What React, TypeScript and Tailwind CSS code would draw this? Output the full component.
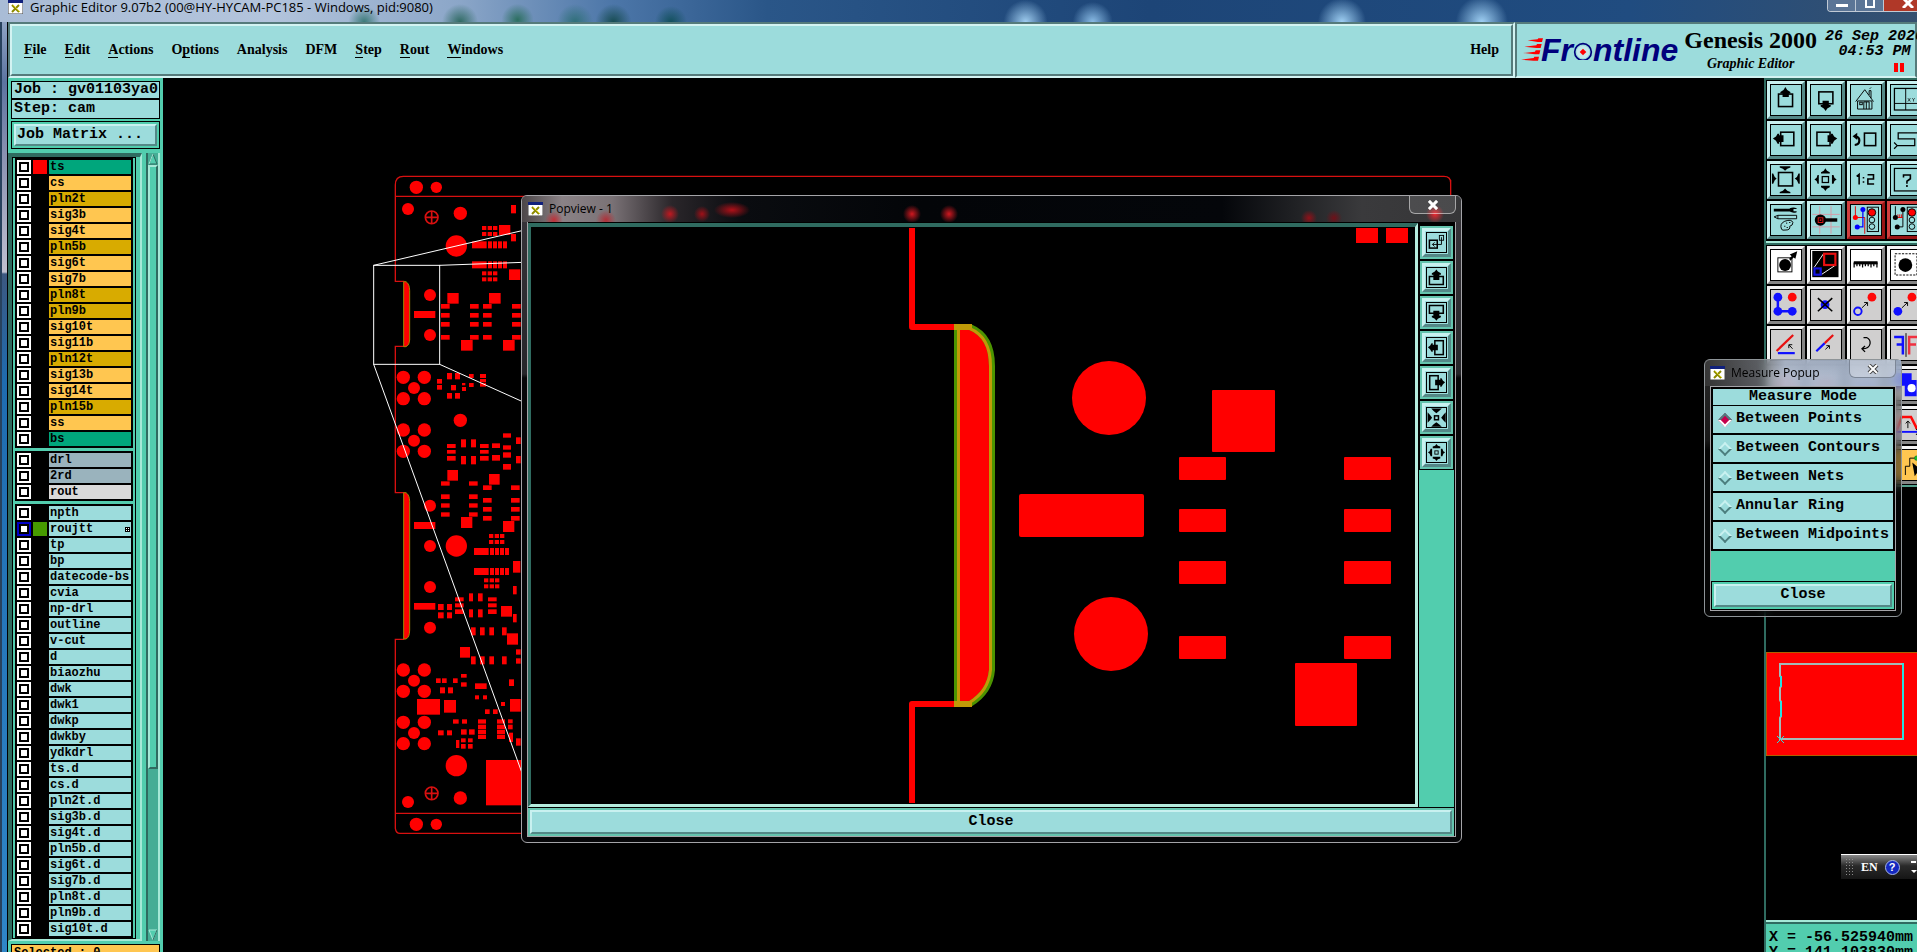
import { useState, type ReactNode } from "react";
import { clsx } from "clsx";

type Layer = {
  name: string;
  tone: string;
  swatch?: string;
  work?: boolean;
};

const GREEN = "bg-[#00a67c]";
const AMBER = "bg-[#ffc650]";
const GOLD = "bg-[#d8ab00]";
const STEEL = "bg-[#9ab3bd]";
const SILVER = "bg-[#dadada]";
const AQUA = "bg-[#9cdcdc]";

const raised = "border-[#c9f1f0] border-r-[#548887] border-b-[#548887]";
const mono = "font-['Liberation_Mono',monospace] font-bold";

const misc = [
  "tp", "bp", "datecode-bs", "cvia", "np-drl", "outline", "v-cut", "d", "biaozhu",
  "dwk", "dwk1", "dwkp", "dwkby", "ydkdrl", "ts.d", "cs.d", "pln2t.d", "sig3b.d",
  "sig4t.d", "pln5b.d", "sig6t.d", "sig7b.d", "pln8t.d", "pln9b.d", "sig10t.d",
];

const layerGroups: Layer[][] = [
  [
    { name: "ts", tone: GREEN, swatch: "bg-[#ff0000]" },
    { name: "cs", tone: AMBER },
    { name: "pln2t", tone: GOLD },
    { name: "sig3b", tone: AMBER },
    { name: "sig4t", tone: AMBER },
    { name: "pln5b", tone: GOLD },
    { name: "sig6t", tone: AMBER },
    { name: "sig7b", tone: AMBER },
    { name: "pln8t", tone: GOLD },
    { name: "pln9b", tone: GOLD },
    { name: "sig10t", tone: AMBER },
    { name: "sig11b", tone: AMBER },
    { name: "pln12t", tone: GOLD },
    { name: "sig13b", tone: AMBER },
    { name: "sig14t", tone: AMBER },
    { name: "pln15b", tone: GOLD },
    { name: "ss", tone: AMBER },
    { name: "bs", tone: GREEN },
  ],
  [
    { name: "drl", tone: STEEL },
    { name: "2rd", tone: STEEL },
    { name: "rout", tone: SILVER },
  ],
  [
    { name: "npth", tone: AQUA },
    { name: "roujtt", tone: AQUA, swatch: "bg-[#469a00]", work: true },
    ...misc.map((name) => ({ name, tone: AQUA })),
  ],
];

// label, index of the underlined mnemonic (-1 for none)
const menus: [string, number][] = [
  ["File", 0],
  ["Edit", 0],
  ["Actions", 0],
  ["Options", 1],
  ["Analysis", -1],
  ["DFM", -1],
  ["Step", 0],
  ["Rout", 0],
  ["Windows", 0],
];

const measureModes = [
  "Between Points",
  "Between Contours",
  "Between Nets",
  "Annular Ring",
  "Between Midpoints",
];

/* Board artwork, three units to a pixel */
const drills: [number, number, number][] = [
  [169, 82, 20], [229, 82, 17], [144, 147, 18], [301, 160, 20], [289, 258, 32],
  [210, 405, 18], [210, 525, 18], [301, 781, 20], [210, 1037, 18],
  [289, 1158, 32], [210, 1158, 18], [210, 1281, 18], [210, 1403, 18],
  [289, 1817, 32], [144, 1926, 18], [301, 1914, 20], [169, 1993, 20], [229, 1993, 17],
];

const quads = [684, 842, 1562, 1719];

const pads: [number, number, number, number][] = [
  [453, 135, 15, 25], [417, 195, 34, 30], [453, 222, 15, 22], [447, 328, 34, 32],
  [262, 399, 34, 32], [387, 399, 35, 32], [303, 540, 35, 32], [429, 540, 35, 32],
  [162, 453, 64, 21], [162, 1086, 64, 21], [162, 1329, 64, 20],
  [231, 657, 15, 14], [231, 675, 15, 14], [261, 639, 15, 19], [285, 639, 15, 19],
  [273, 675, 15, 16], [306, 669, 10, 7], [306, 681, 12, 12], [261, 699, 15, 17],
  [285, 699, 15, 17], [327, 642, 14, 12], [327, 669, 14, 12], [360, 642, 18, 12],
  [360, 657, 18, 10], [360, 669, 18, 11],
  [261, 852, 26, 12], [261, 870, 26, 11], [261, 888, 26, 14],
  [303, 838, 15, 24], [333, 838, 15, 24], [303, 888, 15, 25], [333, 888, 15, 25],
  [360, 852, 26, 12], [360, 870, 26, 11], [360, 888, 26, 14],
  [396, 850, 24, 14], [396, 885, 24, 17], [429, 820, 24, 13], [429, 856, 24, 13],
  [429, 877, 24, 16], [429, 912, 24, 17], [468, 832, 14, 20], [468, 888, 14, 22],
  [262, 930, 32, 32], [387, 942, 32, 32],
  [243, 964, 26, 13], [327, 964, 26, 13], [243, 1003, 26, 14], [327, 1003, 26, 14],
  [243, 1030, 26, 13], [327, 1030, 26, 13], [243, 1057, 26, 13], [327, 1057, 26, 13],
  [369, 976, 26, 14], [453, 976, 26, 14], [369, 1014, 26, 14], [453, 1014, 26, 14],
  [369, 1041, 26, 14], [453, 1041, 26, 14], [369, 1068, 26, 14], [453, 1068, 26, 14],
  [303, 1071, 34, 33], [429, 1083, 34, 33],
  [459, 1203, 22, 35], [459, 1278, 11, 25], [459, 1362, 11, 25],
  [327, 1300, 12, 24], [354, 1300, 14, 24], [327, 1348, 12, 24], [354, 1348, 14, 24],
  [285, 1312, 26, 12], [285, 1330, 26, 12], [285, 1348, 26, 14],
  [384, 1312, 26, 12], [384, 1330, 26, 12], [384, 1348, 26, 14],
  [423, 1338, 33, 32], [234, 1332, 17, 18], [261, 1332, 15, 18],
  [234, 1357, 17, 18], [261, 1357, 15, 18],
  [333, 1402, 14, 24], [360, 1402, 14, 24], [388, 1402, 14, 24], [426, 1402, 14, 24],
  [333, 1489, 14, 24], [360, 1489, 14, 24], [388, 1489, 14, 24], [426, 1489, 14, 24],
  [441, 1420, 33, 34], [300, 1461, 30, 32], [468, 1468, 14, 16], [468, 1495, 14, 16],
  [228, 1555, 14, 14], [246, 1555, 14, 14], [279, 1555, 14, 14], [303, 1542, 17, 11],
  [303, 1567, 17, 13], [240, 1582, 15, 18], [264, 1582, 15, 18],
  [171, 1617, 69, 47], [252, 1620, 36, 38], [345, 1570, 35, 17], [447, 1558, 15, 20],
  [345, 1606, 12, 12], [369, 1606, 12, 12], [423, 1626, 12, 12], [450, 1617, 32, 38],
  [375, 1648, 14, 14], [399, 1648, 14, 14], [279, 1678, 17, 13], [306, 1678, 15, 13],
  [354, 1678, 24, 13], [354, 1694, 24, 13], [354, 1709, 24, 13], [354, 1724, 24, 13],
  [411, 1678, 24, 13], [411, 1694, 24, 13], [411, 1709, 24, 13], [411, 1724, 24, 13],
  [444, 1678, 14, 12], [444, 1694, 14, 14], [447, 1718, 12, 28],
  [234, 1711, 17, 15], [261, 1711, 15, 15], [303, 1708, 17, 16], [327, 1708, 17, 16],
  [288, 1740, 10, 24], [303, 1735, 14, 12], [303, 1752, 14, 14], [324, 1735, 14, 12],
  [324, 1752, 14, 14], [468, 1735, 14, 22], [378, 1800, 110, 136],
];

// fine-pitch rows: a merged bar, then single fingers
const combs: [number, number][] = [[336, 244], [336, 304], [342, 1164], [342, 1224]];
const grids: [number, number][] = [[366, 198], [366, 334], [387, 1122], [372, 1255]];

function BoardView() {
  return (
    <svg className="absolute inset-0 h-full w-full" aria-label="Board view">
      <g transform="translate(197 82) scale(0.33333)">
        <g fill="none" stroke="#d81010" strokeWidth="4">
          <path d="M3272 60V240M3272 68Q3272 49 3252 49H130Q106 49 106 75V364H133M133 559H106V998H133M133 1438H106V2005Q108 2020 120 2020H600M106 109H600M106 1960H600" />
          <circle cx="215" cy="172" r="19" strokeWidth="5" />
          <path d="M215 153V191M196 172H234" strokeWidth="5" />
          <circle cx="215" cy="1900" r="19" strokeWidth="5" />
          <path d="M215 1881V1919M196 1900H234" strokeWidth="5" />
        </g>
        <g fill="#ff0000">
          {drills.map(([x, y, r]) => (
            <circle key={`${x}-${y}`} cx={x} cy={y} r={r} />
          ))}
          {quads.map((y) => (
            <g key={y}>
              <circle cx="130" cy={y - 32} r="20" />
              <circle cx="193" cy={y - 32} r="20" />
              <circle cx="162" cy={y} r="18" />
              <circle cx="130" cy={y + 32} r="20" />
              <circle cx="193" cy={y + 32} r="20" />
            </g>
          ))}
          {pads.map(([x, y, w, h]) => (
            <rect key={`${x}-${y}`} x={x} y={y} width={w} height={h} />
          ))}
          {[243, 330, 369, 456].map((x) =>
            [432, 459, 486, 525].map((y) => (
              <rect key={`${x}-${y}`} x={x} y={y} width="26" height="14" />
            )),
          )}
          {combs.map(([x, y]) => (
            <g key={y}>
              <rect x={x} y={y} width="44" height="21" />
              {[48, 63, 78, 93].map((dx) => (
                <rect key={dx} x={x + dx} y={y} width="12" height="21" />
              ))}
            </g>
          ))}
          {grids.map(([x, y]) =>
            [0, 17, 33].map((dx) =>
              [0, 18].map((dy) => (
                <rect key={`${x}-${y}-${dx}-${dy}`} x={x + dx} y={y + dy} width="13" height="12" />
              )),
            ),
          )}
        </g>
        <g fill="#ff0000" stroke="#9c8a00" strokeWidth="3">
          <path d="M131 365H138Q149 372 149 392V540Q149 556 138 560H131Z" />
          <path d="M131 998H138Q149 1005 149 1025V1410Q149 1432 138 1437H131Z" />
        </g>
        <g fill="none" stroke="#ffffff" strokeWidth="3">
          <rect x="41" y="316" width="198" height="297" />
          <path d="M41 316L490 211M239 316L490 307M239 613L490 726M41 613L490 1850" />
        </g>
      </g>
    </svg>
  );
}

function PopviewDrawing() {
  const slot = "M957 327H970Q992 336 992 366V670Q990 692 970 704H957Z";

  return (
    <svg className="h-full w-full" aria-label="Popview drawing">
      <clipPath id="slot">
        <path d={slot} />
      </clipPath>
      <g transform="translate(-531 -227)">
        <g fill="none" stroke="#ff0000" strokeWidth="6" strokeLinejoin="round">
          <path d="M912 228V327H960M960 704H912V803" />
        </g>
        <path d={slot} fill="#ff0000" stroke="#4c9400" strokeWidth="6" strokeLinejoin="round" />
        <path d={slot} fill="none" stroke="#c09a08" strokeWidth="6" clipPath="url(#slot)" />
        <path d="M954 327H972M954 704H972" stroke="#c09a08" strokeWidth="6" />
        <g fill="#ff0000">
          <circle cx="1109" cy="398" r="37" />
          <circle cx="1111" cy="634" r="37" />
          <rect x="1212" y="390" width="63" height="62" rx="1" />
          <rect x="1295" y="663" width="62" height="63" rx="1" />
          <rect x="1019" y="494" width="125" height="43" rx="2" />
          {[457, 509, 561, 636].map((y) => (
            <g key={y}>
              <rect x="1179" y={y} width="47" height="23" rx="1" />
              <rect x="1344" y={y} width="47" height="23" rx="1" />
            </g>
          ))}
          <rect x="1356" y="228" width="22" height="15" />
          <rect x="1386" y="228" width="22" height="15" />
        </g>
      </g>
    </svg>
  );
}

const line = { fill: "none", stroke: "#000", strokeWidth: 5 };
const thin = { fill: "none", stroke: "#000", strokeWidth: 3 };

const viewTools: { label: string; icon: ReactNode; red?: boolean }[] = [
  {
    label: "Pan up",
    icon: (
      <>
        <rect x="24" y="29" width="45" height="40" {...line} />
        <path d="M46 6L52 16L62 22V27H57V38H37V27H30V22L40 16Z" />
      </>
    ),
  },
  {
    label: "Pan down",
    icon: (
      <>
        <rect x="25" y="22" width="45" height="38" {...line} />
        <path d="M37 50H57V64H63V69L52 75L47 83L41 75L31 69V64H37Z" />
      </>
    ),
  },
  {
    label: "Home",
    icon: (
      <>
        <path d="M15 53L44 15L72 53M21 51V77H67V51H21M41 77V54H58V77M58 32V18H64V42M49 54V77M60 12L64 8" {...thin} />
        <rect x="28" y="55" width="8" height="8" {...thin} />
      </>
    ),
  },
  {
    label: "XY area",
    icon: (
      <>
        <rect x="11" y="11" width="76" height="69" {...line} strokeWidth={4} />
        <path d="M47 11V80M11 59H87" {...thin} />
        <path d="M54 42L62 53M62 42L54 53M68 42L72 47L76 42M72 47V53" {...thin} strokeWidth={2} />
      </>
    ),
  },
  {
    label: "Pan left",
    icon: (
      <>
        <rect x="31" y="23" width="42" height="43" {...line} />
        <path d="M6 43L16 37L21 28H26V33H40V54H26V60H21L16 50Z" />
      </>
    ),
  },
  {
    label: "Pan right",
    icon: (
      <>
        <rect x="19" y="23" width="42" height="43" {...line} />
        <path d="M84 43L74 37L69 28H64V33H53V54H64V60H69L74 50Z" />
      </>
    ),
  },
  {
    label: "Previous view",
    icon: (
      <>
        <rect x="43" y="26" width="36" height="40" {...line} />
        <path d="M12 64C32 62 30 36 15 38" {...line} strokeWidth={7} />
        <path d="M5 36L20 25V48Z" />
      </>
    ),
  },
  {
    label: "Serpent",
    icon: <path d="M96 25H23V44H76V66H20M20 66L10 56M20 66L10 76" {...line} strokeWidth={4} />,
  },
  {
    label: "Zoom in",
    icon: (
      <>
        <rect x="24" y="24" width="45" height="43" {...line} />
        <path d="M28 4H62V8L52 12L45 18L38 12L28 8ZM28 90H62V86L52 82L45 75L38 82L28 86ZM3 27H7L12 38L18 43L12 49L7 60H3ZM92 27H88L83 38L76 43L83 49L88 60H92Z" />
      </>
    ),
  },
  {
    label: "Zoom out",
    icon: (
      <>
        <rect x="36" y="37" width="20" height="19" {...line} strokeWidth={4} />
        <path d="M46 10L51 18L60 23V27H32V23L41 18ZM46 83L51 76L60 71V66H32V71L41 76ZM11 46L18 41L21 32H25V60H21L18 51ZM82 46L75 41L72 32H67V60H72L75 51Z" />
      </>
    ),
  },
  {
    label: "Scale 1:2",
    icon: <path d="M18 36L26 30V62M40 38V43M40 52V57M53 31H72V45H54V61H74" {...line} />,
  },
  {
    label: "Help on view",
    icon: (
      <>
        <rect x="11" y="11" width="76" height="72" {...line} strokeWidth={4} />
        <path d="M40 40V32H62V44L51 52V60M51 64V70" {...line} />
      </>
    ),
  },
  {
    label: "Options",
    icon: (
      <>
        <path d="M9 12H60V10Q72 6 82 10V13H72V20H82V23Q70 27 60 21H9Z" />
        <path d="M10 38L22 33H82V44H22Z M22 33V44" {...thin} />
        <path d="M34 78Q26 60 44 52Q66 44 70 56Q70 66 60 68Q62 80 48 80Q36 82 34 78ZM42 68H46M48 58H52M58 56H62M50 72H54" {...thin} />
      </>
    ),
  },
  {
    label: "Snap",
    icon: (
      <>
        <path d="M4 30H92M4 70H92M28 4V92M64 4V92" fill="none" stroke="#d79aa6" strokeWidth="3" />
        <path d="M30 48H84" stroke="#000" strokeWidth="11" />
        <circle cx="30" cy="48" r="18" />
        <rect x="23" y="41" width="15" height="15" fill="none" stroke="#e01818" strokeWidth="3" />
        <rect x="28" y="46" width="5" height="5" fill="#e01818" />
      </>
    ),
  },
  {
    label: "Net control",
    red: true,
    icon: (
      <>
        <path d="M14 4V40M14 40H44V92" fill="none" stroke="#e00000" strokeWidth="3" />
        <path d="M38 14V70H20" fill="none" stroke="#0000ff" strokeWidth="4" />
        <circle cx="38" cy="14" r="8" fill="#0000ff" />
        <circle cx="20" cy="70" r="8" fill="#0000ff" />
        <circle cx="14" cy="40" r="8" fill="#ff0000" />
        <rect x="52" y="7" width="36" height="78" {...thin} />
        <circle cx="67" cy="24" r="12" fill="#ff0000" stroke="#000" strokeWidth="3" />
        <circle cx="67" cy="48" r="9" {...thin} />
        <circle cx="67" cy="69" r="9" {...thin} />
      </>
    ),
  },
  {
    label: "Spacing control",
    red: true,
    icon: (
      <>
        <path d="M14 4V40M38 14V70H20" {...thin} />
        <path d="M22 30V40H38M28 30V40M34 30V40" fill="none" stroke="#e00000" strokeWidth="3" />
        <circle cx="38" cy="14" r="8" />
        <circle cx="20" cy="70" r="8" />
        <circle cx="14" cy="40" r="8" />
        <rect x="52" y="7" width="36" height="78" {...thin} />
        <circle cx="67" cy="24" r="12" fill="#ff0000" stroke="#000" strokeWidth="3" />
        <circle cx="67" cy="48" r="9" {...thin} />
        <circle cx="67" cy="69" r="9" {...thin} />
      </>
    ),
  },
];

const editTools: { label: string; icon: ReactNode; face: string }[] = [
  {
    label: "Select feature",
    face: "bg-white",
    icon: (
      <>
        <rect x="22" y="25" width="45" height="45" {...thin} />
        <circle cx="45" cy="48" r="19" />
        <path d="M58 28L66 20L60 14L84 4L78 28L72 24L62 34Z" />
      </>
    ),
  },
  {
    label: "Area zoom",
    face: "bg-white",
    icon: (
      <>
        <rect x="4" y="3" width="84" height="84" />
        <path d="M10 56L40 12M34 78L76 50" fill="none" stroke="#fff" strokeWidth="3" />
        <rect x="42" y="12" width="36" height="36" fill="none" stroke="#e81010" strokeWidth="7" />
        <rect x="11" y="59" width="20" height="20" fill="none" stroke="#1414e0" strokeWidth="7" />
      </>
    ),
  },
  {
    label: "Measure",
    face: "bg-white",
    icon: (
      <>
        <path d="M9 41H85" {...line} strokeWidth={10} />
        <path d="M10 40V56M19 40V52M28 40V52M37 40V56M46 40V52M55 40V52M64 40V56M73 40V52M83 40V56" {...line} strokeWidth={4} />
      </>
    ),
  },
  {
    label: "Select area",
    face: "bg-white",
    icon: (
      <>
        <rect x="13" y="12" width="70" height="68" strokeDasharray="7 4" {...thin} />
        <circle cx="46" cy="48" r="22" />
      </>
    ),
  },
  {
    label: "Chain",
    face: "bg-[#d0cfcf]",
    icon: (
      <>
        <path d="M22 23V68H68" fill="none" stroke="#1010ff" strokeWidth="8" />
        <circle cx="22" cy="23" r="14" fill="#1010ff" />
        <circle cx="22" cy="68" r="14" fill="#1010ff" />
        <circle cx="68" cy="68" r="14" fill="#1010ff" />
        <circle cx="68" cy="23" r="14" fill="#ff0808" />
      </>
    ),
  },
  {
    label: "Delete",
    face: "bg-[#d0cfcf]",
    icon: (
      <>
        <circle cx="45" cy="47" r="14" fill="#1010ff" />
        <path d="M22 26L68 68M68 26L22 68" {...line} />
      </>
    ),
  },
  {
    label: "Move",
    face: "bg-[#d0cfcf]",
    icon: (
      <>
        <circle cx="22" cy="68" r="12" fill="none" stroke="#1010ff" strokeWidth="6" />
        <circle cx="67" cy="23" r="14" fill="#ff0808" />
        <path d="M35 57L52 41M42 40H53V51" {...thin} />
      </>
    ),
  },
  {
    label: "Copy",
    face: "bg-[#d0cfcf]",
    icon: (
      <>
        <circle cx="22" cy="68" r="14" fill="#1010ff" />
        <circle cx="67" cy="23" r="14" fill="#ff0808" />
        <path d="M35 57L52 41M42 40H53V51" {...thin} />
      </>
    ),
  },
  {
    label: "Rotate line",
    face: "bg-[#d0cfcf]",
    icon: (
      <>
        <path d="M18 67L71 16" stroke="#e81010" strokeWidth="7" />
        <path d="M22 74H76" stroke="#1010ff" strokeWidth="7" />
        <path d="M69 60L58 48M57 58V47H68" {...thin} />
      </>
    ),
  },
  {
    label: "Stretch line",
    face: "bg-[#d0cfcf]",
    icon: (
      <>
        <path d="M17 68L44 42" stroke="#1010ff" strokeWidth="7" />
        <path d="M44 42L71 16" stroke="#e81010" strokeWidth="7" />
        <path d="M46 62L58 51M49 50H59V60" {...thin} />
      </>
    ),
  },
  {
    label: "Rotate",
    face: "bg-[#d0cfcf]",
    icon: <path d="M40 24H50Q63 30 61 44Q58 60 36 60M45 51L35 60L45 70" {...line} strokeWidth={4} />,
  },
  {
    label: "Mirror",
    face: "bg-[#d0cfcf]",
    icon: (
      <>
        <path d="M10 22H38V78M18 46H38" fill="none" stroke="#1010ff" strokeWidth="8" />
        <path d="M88 22H58V78M58 46H80" fill="none" stroke="#f03040" strokeWidth="8" />
        <path d="M48 10V86" {...thin} />
      </>
    ),
  },
  {
    label: "Polygon",
    face: "bg-[#d0cfcf]",
    icon: <path d="M20 60L48 20L76 60Z" fill="none" stroke="#e81010" strokeWidth="6" />,
  },
  {
    label: "Arc",
    face: "bg-[#d0cfcf]",
    icon: <path d="M16 60Q46 10 76 60" fill="none" stroke="#e81010" strokeWidth="6" />,
  },
  {
    label: "Line",
    face: "bg-[#d0cfcf]",
    icon: <path d="M16 50H80" stroke="#1010ff" strokeWidth="6" />,
  },
  {
    label: "Pad shape",
    face: "bg-[#d0cfcf]",
    icon: (
      <>
        <path d="M10 10H66V32H82V84H44V50H10Z" fill="#1010ff" />
        <circle cx="66" cy="58" r="13" fill="#fff" />
      </>
    ),
  },
  {
    label: "Break",
    face: "bg-[#d0cfcf]",
    icon: <path d="M20 70L70 20" {...line} />,
  },
  {
    label: "Resize",
    face: "bg-[#d0cfcf]",
    icon: <rect x="24" y="24" width="46" height="46" {...line} />,
  },
  {
    label: "Fill",
    face: "bg-[#d0cfcf]",
    icon: <circle cx="46" cy="46" r="22" />,
  },
  {
    label: "Move edge",
    face: "bg-[#d0cfcf]",
    icon: (
      <>
        <path d="M18 66L34 22H64L84 62" fill="none" stroke="#ff0808" strokeWidth="8" />
        <path d="M10 70H90" stroke="#1010ff" strokeWidth="6" />
        <path d="M54 58V36M47 43L54 35L61 43M80 60L88 70L80 80" {...thin} />
      </>
    ),
  },
  {
    label: "Join",
    face: "bg-[#ffc650]",
    icon: <path d="M14 66V40H50V20H80" {...thin} />,
  },
  {
    label: "Cut net",
    face: "bg-[#ffc650]",
    icon: <path d="M20 20L70 70" {...line} />,
  },
  {
    label: "Route",
    face: "bg-[#ffc650]",
    icon: <path d="M14 20H46V70H80" {...thin} />,
  },
  {
    label: "Pick net",
    face: "bg-[#ffc650]",
    icon: (
      <>
        <path d="M46 80V52H60V26H76M88 26H96" {...thin} />
        <circle cx="82" cy="26" r="7" fill="#20c020" stroke="#063" strokeWidth="2" />
        <path d="M68 40L76 84L82 74L92 92L98 88L90 70L98 66Z" />
      </>
    ),
  },
];

// the narrow strip has its own 21px drawings, where the glyph fills the frame
const popTools: { label: string; icon: ReactNode }[] = [
  {
    label: "New popview",
    icon: (
      <>
        <rect x="8" y="24" width="26" height="26" {...line} />
        <rect x="41" y="8" width="14" height="16" {...thin} />
        <path d="M48 14V38H18M25 31L18 38L25 45" {...thin} />
      </>
    ),
  },
  {
    label: "Pan up",
    icon: (
      <>
        <path d="M24 28H8V55H54V28H38" {...line} />
        <path d="M31 5L36 12L46 17V22H41V40H21V22H16V17L26 12Z" />
      </>
    ),
  },
  {
    label: "Pan down",
    icon: (
      <>
        <path d="M24 34H8V8H54V34H38" {...line} />
        <path d="M31 59L36 52L46 47V42H41V26H21V42H16V47L26 52Z" />
      </>
    ),
  },
  {
    label: "Pan left",
    icon: (
      <>
        <rect x="26" y="9" width="28" height="46" {...line} />
        <path d="M3 31L10 26L15 17H19V22H36V41H19V46H15L10 37Z" />
      </>
    ),
  },
  {
    label: "Pan right",
    icon: (
      <>
        <rect x="9" y="9" width="28" height="46" {...line} />
        <path d="M60 31L53 26L48 17H44V22H27V41H44V46H48L53 37Z" />
      </>
    ),
  },
  {
    label: "Zoom in",
    icon: (
      <>
        <rect x="25" y="26" width="13" height="13" {...line} />
        <path d="M14 2H49L40 10L31 17L22 10ZM14 62H49L40 54L31 47L22 54ZM2 14V49L10 41L17 32L10 23ZM62 14V49L54 41L47 32L54 23Z" />
      </>
    ),
  },
  {
    label: "Zoom out",
    icon: (
      <>
        <rect x="26" y="26" width="11" height="11" {...thin} />
        <path d="M31 3L36 9L44 12V17H19V12L27 9ZM31 60L36 54L44 51V46H19V51L27 54ZM3 31L9 27L12 19H17V44H12L9 36ZM60 31L54 27L51 19H46V44H51L54 36Z" />
      </>
    ),
  },
];

function ToolButton({ label, face, children }: { label: string; face: string; children: ReactNode }) {
  return (
    <button
      type="button"
      aria-label={label}
      className={clsx("flex size-[38px] items-center justify-center border-3", face)}
    >
      <svg viewBox="0 0 96 96" className="size-8 border border-black">
        {children}
      </svg>
    </button>
  );
}

function XIcon() {
  return (
    <svg viewBox="0 0 15 14" className="h-[14px] w-[15px] shrink-0">
      <rect width="15" height="14" fill="#fff" stroke="#444" />
      <rect width="15" height="3" fill="#10207c" />
      <path d="M4 5L11 12M11 5L4 12" stroke="#8c8a00" strokeWidth="2" />
      <path d="M5 5L12 12" stroke="#d8d020" strokeWidth="1" />
    </svg>
  );
}

function TitleBar() {
  return (
    <header className="relative flex h-[22px] shrink-0 items-start overflow-hidden bg-[linear-gradient(90deg,#a9bcd6_0%,#b3c4dc_14%,#8ba6c8_24%,#4c76a8_32%,#2a5688_40%,#1d4577_60%,#204c80_85%,#35506f_100%)]">
      <div className="absolute inset-0 bg-[radial-gradient(circle_at_19%_100%,#3b7a78_0,transparent_16px),radial-gradient(circle_at_24%_100%,#2f6a62_0,transparent_18px),radial-gradient(circle_at_27%_90%,#2c6f60_0,transparent_16px),radial-gradient(circle_at_30%_100%,#2f6f78_0,transparent_18px),radial-gradient(circle_at_32%_100%,#174c52_0,transparent_18px),radial-gradient(circle_at_35%_100%,#12505c_0,transparent_16px),radial-gradient(circle_at_53.5%_100%,#9fcdf0_0,transparent_22px),radial-gradient(circle_at_57%_100%,#8abce6_0,transparent_20px),radial-gradient(circle_at_70%_100%,#9fd0f4_0,transparent_24px),radial-gradient(circle_at_77.3%_100%,#9fd0f4_0,transparent_26px)]" />
      <div className="relative flex items-start gap-[7px] pl-2">
        <XIcon />
        <h1 className="font-['Open_Sans',sans-serif] text-[13px] leading-[14px] text-black">
          Graphic Editor 9.07b2 (00@HY-HYCAM-PC185 - Windows, pid:9080)
        </h1>
      </div>
      <div className="absolute top-0 -right-4 flex h-3 overflow-hidden rounded-b-sm border border-t-0 border-white/70 text-white">
        <button type="button" aria-label="Minimize" className="flex w-7 items-center justify-center border-r border-white/60 bg-[#5b7596]">
          <span className="h-[3px] w-3 bg-white" />
        </button>
        <button type="button" aria-label="Maximize" className="flex w-7 items-start justify-center border-r border-white/60 bg-[#5b7596]">
          <span className="h-2 w-[10px] border-2 border-t-0 border-white" />
        </button>
        <button type="button" aria-label="Close window" className="flex w-12 items-start justify-center bg-[#b03828]">
          <svg viewBox="0 0 12 8" className="h-2 w-3">
            <path d="M1 -2L11 8M11 -2L1 8" stroke="#fff" strokeWidth="3" />
          </svg>
        </button>
      </div>
    </header>
  );
}

function Logo() {
  return (
    <div className="flex items-center" aria-label="Frontline">
      <svg viewBox="0 0 66 72" className="-mr-0.5 h-6 w-[22px]" fill="#ff0000">
        <path d="M20 7L50 4L52 1H66L63 12H50ZM10 26L46 22L48 18H62L59 30H46ZM6 45L42 41L44 37H58L55 49H42ZM0 65L38 60L40 56H54L51 68H38Z" />
      </svg>
      <span className="flex items-baseline font-['Liberation_Sans',sans-serif] text-[32px] leading-10 font-bold text-[#00007c] italic">
        Fr
        <svg viewBox="0 0 60 60" className="size-5 self-center">
          <circle cx="30" cy="36" r="25" fill="none" stroke="#00007c" strokeWidth="5" />
          <circle cx="30" cy="36" r="19" fill="#c4e8ea" />
          <path d="M30 26L40 36L30 46L20 36Z" fill="#ff0000" />
        </svg>
        ntline
      </span>
    </div>
  );
}

function MenuStrip() {
  return (
    <div className="flex h-14 shrink-0 font-['Liberation_Serif',serif] text-black">
      <div className="flex-1 border-2 border-[#557b7b] border-r-[#d3f3f2] border-b-[#d3f3f2]">
        <nav className="flex h-full items-center gap-[18px] border-2 border-[#d3f3f2] border-r-[#557b7b] border-b-[#557b7b] bg-[#9cdcdc] px-3 text-sm font-bold">
          {menus.map(([label, key]) => (
            <button key={label} type="button">
              {key < 0 ? (
                label
              ) : (
                <>
                  {label.slice(0, key)}
                  <span className="border-b border-black">{label[key]}</span>
                  {label.slice(key + 1)}
                </>
              )}
            </button>
          ))}
          <button type="button" className="ml-auto">Help</button>
        </nav>
      </div>
      <div className="flex w-[402px] shrink-0 items-center border-2 border-[#557b7b] border-b-[#d3f3f2] bg-[#9cdcdc] pl-1">
        <Logo />
        <div className="flex shrink-0 flex-col items-center pl-1.5">
          <p className="text-2xl leading-7 font-bold">Genesis 2000</p>
          <p className="text-sm leading-5 font-bold italic">Graphic Editor</p>
        </div>
        <div className={clsx(mono, "flex shrink-0 flex-col items-center pl-2 text-[15px] leading-[15px] whitespace-pre italic")}>
          <p>26 Sep 2020</p>
          <p>04:53 PM</p>
          <div className="mt-1 flex gap-0.5 pl-12">
            <span className="h-[9px] w-1 bg-[#ff0000]" />
            <span className="h-[9px] w-1 bg-[#ff0000]" />
          </div>
        </div>
      </div>
    </div>
  );
}

function LayerRow({ layer }: { layer: Layer }) {
  return (
    <li className="flex h-[14px] gap-0.5">
      <input
        id={`layer-${layer.name}`}
        type="checkbox"
        className={clsx(
          "size-[14px] shrink-0 appearance-none border-2 bg-white shadow-[inset_0_0_0_2px_#000]",
          layer.work ? "border-[#0000c8]" : "border-white",
        )}
      />
      <span className={clsx("w-[14px] shrink-0", layer.swatch)} />
      <label
        htmlFor={`layer-${layer.name}`}
        className={clsx("flex flex-1 items-center justify-between pl-px text-xs leading-[14px]", layer.tone)}
      >
        {layer.name}
        {layer.work && (
          <svg viewBox="0 0 5 5" className="mr-px size-[5px]">
            <rect width="5" height="5" />
            <path d="M1 1h1v1h-1zM3 1h1v1h-1zM1 3h1v1h-1zM3 3h1v1h-1z" fill="#fff" />
          </svg>
        )}
      </label>
    </li>
  );
}

function Sidebar() {
  return (
    <aside className={clsx(mono, "flex w-[155px] shrink-0 flex-col bg-[#52cdae] text-black")}>
      <div className="mx-[3px] mt-[3px] border border-black bg-[#9cdcdc] text-[15px]">
        <p className="flex h-[18px] items-center border-b-2 border-black pt-px pl-0.5 whitespace-pre">Job : gv01103ya0</p>
        <p className="flex h-[18px] items-center pt-px pl-0.5 whitespace-pre">Step: cam</p>
      </div>
      <div className="mx-[3px] mt-0.5 border border-black p-0.5">
        <button
          type="button"
          className={clsx("flex h-[22px] w-full items-center border-2 bg-[#9cdcdc] pt-px pl-px text-[15px] whitespace-pre", raised)}
        >
          Job Matrix ...
        </button>
      </div>
      <div className="mt-1 flex">
        <div className="flex-1 border-4 border-r-2 border-b-2 border-[#2f6b60] border-r-[#a5e9d7] border-b-[#a5e9d7]">
          <div className="mr-1 flex border border-black px-0.5">
            <div className="flex flex-1 flex-col gap-[3px]">
              {layerGroups.map((group) => (
                <ul key={group[0].name} className="flex flex-col gap-0.5 bg-black p-0.5">
                  {group.map((layer) => (
                    <LayerRow key={layer.name} layer={layer} />
                  ))}
                </ul>
              ))}
            </div>
          </div>
        </div>
        <div className="mr-[3px] ml-1 flex w-[14px] flex-col border-r-2 border-l-2 border-r-[#a5e9d7] border-l-[#2f6b60] bg-[#45ad95]">
          <svg viewBox="0 0 10 12" className="h-3 w-[10px]">
            <path d="M5 1L9 11H1Z" fill="#52cdae" stroke="#2f6b60" />
            <path d="M5 1L1 11" stroke="#a5e9d7" />
          </svg>
          <div className="h-[604px] border-2 border-[#a5e9d7] border-r-[#2f6b60] border-b-[#2f6b60] bg-[#52cdae]" />
          <svg viewBox="0 0 10 12" className="mt-auto h-3 w-[10px]">
            <path d="M5 11L1 1H9Z" fill="#52cdae" stroke="#a5e9d7" />
            <path d="M9 1L5 11" stroke="#2f6b60" />
          </svg>
        </div>
      </div>
      <p className="mx-[3px] mt-[3px] flex-1 border border-black bg-[#ffc650] pl-0.5 text-xs leading-4 whitespace-pre">
        Selected : 0
      </p>
    </aside>
  );
}

function ToolPanel() {
  return (
    <aside className="flex w-[153px] shrink-0 flex-col overflow-hidden border-l-2 border-[#2f6b60] bg-black">
      <div className="w-[162px] border-t-2 border-[#2f6b60]">
        <div className="grid grid-cols-[repeat(4,38px)] gap-0.5 p-px pb-0.5">
          {viewTools.map((tool) => (
            <ToolButton
              key={tool.label}
              label={tool.label}
              face={clsx("bg-[#9cdcdc]", tool.red ? "border-[#d04040] border-r-[#981414] border-b-[#981414]" : raised)}
            >
              {tool.icon}
            </ToolButton>
          ))}
        </div>
        <div className="h-1 border-t-2 border-b-2 border-t-[#a5e9d7] border-b-[#2f6b60]" />
        <div className="grid grid-cols-[repeat(4,38px)] gap-0.5 border-b-2 border-[#52a08c] p-px">
          {editTools.map((tool) => (
            <ToolButton
              key={tool.label}
              label={tool.label}
              face={clsx("border-[#f4f4f4] border-r-[#858585] border-b-[#858585]", tool.face)}
            >
              {tool.icon}
            </ToolButton>
          ))}
        </div>
      </div>
      <svg viewBox="0 0 151 104" className="mt-[165px] h-[104px] w-[151px] shrink-0" aria-label="Overview">
        <rect x="0.5" y="0.5" width="154" height="103" fill="#ff0000" stroke="#b06000" />
        <path d="M137 12H14V24L15 25V34L14 36V48L15 50V64L14 66V87H137Z" fill="none" stroke="#a4bab8" strokeWidth="2" />
        <path d="M137 11V88M15 24V35M15 49V65" fill="none" stroke="#28e0e0" strokeWidth="2" />
        <path d="M11 84L18 91M18 84L11 91" stroke="#28e0e0" />
      </svg>
      <div className={clsx(mono, "mt-auto h-8 shrink-0 border-t-2 border-[#a5e9d7]")}>
        <div className="h-full border-t-2 border-[#2f6b60] bg-[#52cdae] pl-[3px] text-[15px] leading-[15px] whitespace-pre">
          <p className="pt-1.5">X = -56.525940mm</p>
          <p>Y = 141.103830mm</p>
        </div>
      </div>
    </aside>
  );
}

function WindowClose({ label, dark }: { label: string; dark?: boolean }) {
  return (
    <button
      type="button"
      aria-label={label}
      className={clsx(
        "ml-auto flex h-[18px] w-[47px] items-center justify-center self-start rounded-b-md border border-t-0",
        dark ? "border-white/50 bg-white/10" : "border-[#7c8696] bg-white/30",
      )}
    >
      <svg viewBox="0 0 12 10" className="h-[10px] w-3">
        <path d="M2 1L10 9M10 1L2 9" stroke={dark ? "#fff" : "#444"} strokeWidth={dark ? 3 : 4} />
        <path d="M2 1L10 9M10 1L2 9" stroke="#fff" strokeWidth="2" />
      </svg>
    </button>
  );
}

function Popview() {
  return (
    <section
      aria-label="Popview"
      className="absolute top-[195px] left-[521px] flex h-[648px] w-[941px] flex-col overflow-hidden rounded-md border border-[#a4a4a8] bg-[linear-gradient(180deg,#38343a_0,#26262a_178px,#060608_182px)] p-[5px] pt-0"
    >
      <div className="pointer-events-none absolute inset-x-0 top-0 h-[26px] bg-[radial-gradient(circle_at_32px_24px,#c03038_0,transparent_9px),radial-gradient(circle_at_84px_24px,#b03038_0,transparent_10px),radial-gradient(circle_at_148px_18px,#c01820_0,transparent_9px),radial-gradient(circle_at_180px_18px,#a01018_0,transparent_8px),radial-gradient(ellipse_18px_8px_at_210px_14px,#b01018_0,transparent_100%),radial-gradient(circle_at_390px_18px,#d01820_0,transparent_9px),radial-gradient(circle_at_427px_18px,#d01820_0,transparent_9px),radial-gradient(circle_at_787px_22px,#901018_0,transparent_8px),radial-gradient(circle_at_812px_22px,#701018_0,transparent_8px),radial-gradient(circle_at_913px_18px,#f02830_0,transparent_9px),linear-gradient(90deg,#4c4648_0,#8a8286_40px,#7a7276_90px,#2a262a_150px,#0a0c10_220px,#030508_400px,#04060a_700px,#3a3a3c_840px,#363638_941px)]" />
      <div className="relative flex h-[25px] items-center gap-1.5">
        <span className="pl-px">
          <XIcon />
        </span>
        <h2 className="font-['Open_Sans',sans-serif] text-xs text-black">Popview - 1</h2>
        <WindowClose label="Close popview" dark />
      </div>
      <div className="flex min-h-0 flex-1 flex-col border border-[#a4a4a8] bg-black pt-px pr-px">
        <div className="flex min-h-0 flex-1">
          <div className="min-w-0 flex-1 border-t-4 border-r-3 border-b-3 border-l-3 border-[#2f6b60] border-r-[#b5ecde] border-b-[#b5ecde] bg-black">
            <PopviewDrawing />
          </div>
          <div className="ml-px flex w-[35px] flex-col bg-[#52cdae]">
            <div className="flex flex-col gap-0.5 bg-black px-px pt-[3px] pb-px">
              {popTools.map((tool) => (
                <div key={tool.label} className="bg-[#64c4ae] p-0.5">
                  <button
                    type="button"
                    aria-label={tool.label}
                    className={clsx("flex size-[29px] items-center justify-center border-3 bg-[#9cdcdc]", raised)}
                  >
                    <svg viewBox="0 0 63 63" className="size-[21px] border border-black">
                      {tool.icon}
                    </svg>
                  </button>
                </div>
              ))}
            </div>
          </div>
        </div>
        <div className="mt-px bg-[#64c4ae] p-0.5">
          <button
            type="button"
            className={clsx(mono, "flex h-6 w-full items-center justify-center border-2 bg-[#9cdcdc] text-[15px]", raised)}
          >
            Close
          </button>
        </div>
      </div>
    </section>
  );
}

function MeasurePopup() {
  const [mode, setMode] = useState("Between Points");

  return (
    <section
      aria-label="Measure Popup"
      className="absolute top-[359px] right-[15px] flex w-[198px] flex-col rounded-md border border-[#8e9498] bg-[linear-gradient(180deg,rgba(90,90,90,0.45)_0,rgba(60,60,60,0.4)_80px,rgba(10,10,10,0.5)_90px)] p-[5px] pt-0 backdrop-blur-xs"
    >
      <div className="pointer-events-none absolute inset-x-0 top-0 h-[26px] bg-[linear-gradient(90deg,rgba(120,120,120,0.2)_0,rgba(150,155,165,0.5)_60px,rgba(190,205,230,0.7)_80px,rgba(170,190,220,0.7)_100%)]" />
      <div className="relative flex h-[26px] items-center gap-1.5">
        <XIcon />
        <h2 className="font-['Open_Sans',sans-serif] text-xs text-black">Measure Popup</h2>
        <WindowClose label="Close measure popup" />
      </div>
      <form className={clsx(mono, "relative border border-[#a4a4a8] bg-[#52cdae] text-[15px] text-black")}>
        <div
          role="radiogroup"
          aria-labelledby="measure-heading"
          className="flex flex-col border-2 border-black bg-black"
        >
          <p id="measure-heading" className="mb-px bg-[#9cdcdc] text-center leading-4">Measure Mode</p>
          <div className="flex flex-col gap-0.5">
            {measureModes.map((item) => (
              <label key={item} className="flex h-[27px] items-center gap-1.5 bg-[#9cdcdc] pl-[7px] whitespace-pre">
                <input
                  type="radio"
                  name="measure-mode"
                  checked={mode === item}
                  onChange={() => setMode(item)}
                  className="size-[10px] shrink-0 rotate-45 appearance-none border-2 border-[#c9f1f0] border-r-[#4c7e7e] border-b-[#4c7e7e] checked:border-[#4c7e7e] checked:border-r-white checked:border-b-white checked:bg-[#c4004c]"
                />
                {item}
              </label>
            ))}
          </div>
        </div>
        <div className="h-[30px]" />
        <div className="border border-black p-0.5">
          <button
            type="button"
            className={clsx("flex h-[23px] w-full items-center justify-center border-2 bg-[#9cdcdc]", raised)}
          >
            Close
          </button>
        </div>
      </form>
    </section>
  );
}

function LanguageBar() {
  return (
    <div className="absolute right-0 bottom-[73px] flex h-[25px] w-[76px] items-center border-t border-white bg-[linear-gradient(180deg,#8a8a8a,#2a2a2a_45%,#161616)] pl-1 text-white">
      <span className="h-[18px] w-2 bg-[radial-gradient(#8a8a8a_1px,transparent_1px)] bg-size-[3px_3px]" />
      <button type="button" className="ml-2 font-['Liberation_Serif',serif] text-xs font-bold">EN</button>
      <button
        type="button"
        aria-label="Help"
        className="ml-[7px] flex size-[15px] items-center justify-center rounded-full border border-[#a8b8e8] bg-[#1428c0] font-['Liberation_Sans',sans-serif] text-[11px] font-bold"
      >
        ?
      </button>
      <svg viewBox="0 0 6 14" className="ml-[11px] h-[14px] w-1.5" fill="#fff">
        <path d="M0 1H5V3H0ZM0 10H6L3 13Z" />
      </svg>
    </div>
  );
}

export default function App() {
  return (
    <div className="relative flex h-screen w-full flex-col overflow-hidden bg-black">
      <TitleBar />
      <div className="flex min-h-0 flex-1">
        <div className="w-2 shrink-0 border-r border-l-2 border-r-black border-l-[#28425e] bg-[linear-gradient(180deg,#8fa3c4_0,#5c74a0_60px,#8890b0_130px,#c0c0d0_250px,#3c5880_252px,#1f6cb0_360px,#2f86c8_100%)]" />
        <div className="flex min-w-0 flex-1 flex-col">
          <MenuStrip />
          <div className="flex min-h-0 flex-1">
            <Sidebar />
            <main className="relative min-w-0 flex-1 bg-black">
              <BoardView />
            </main>
            <ToolPanel />
          </div>
        </div>
      </div>
      <Popview />
      <MeasurePopup />
      <LanguageBar />
    </div>
  );
}
